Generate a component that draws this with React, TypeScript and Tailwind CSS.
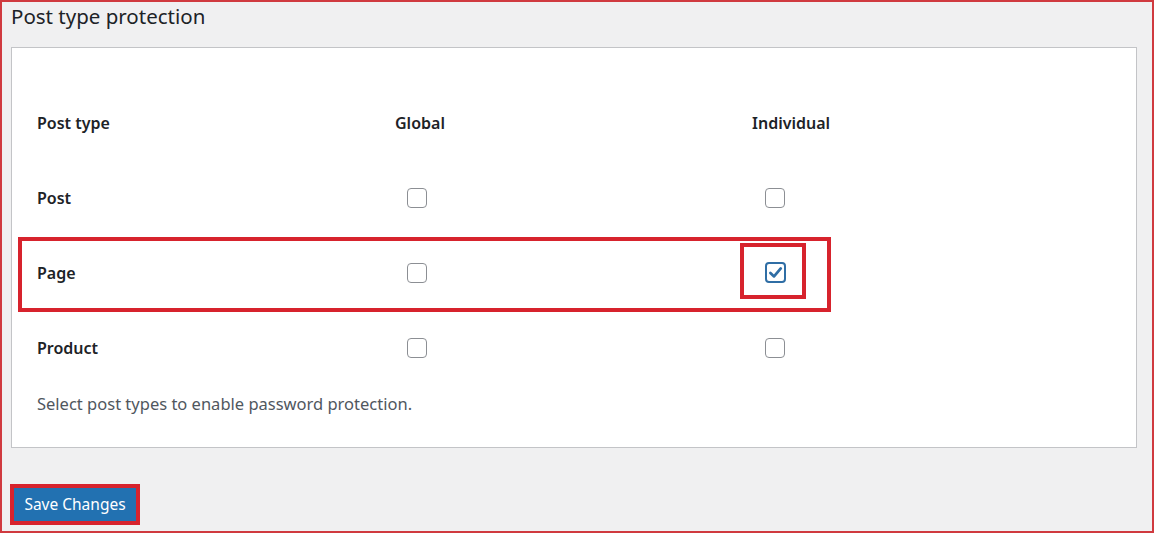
import React from "react";

const font = { fontFamily: '"Noto Sans", "Open Sans", Arial, sans-serif' };

function Box({ checked = false }: { checked?: boolean }) {
  if (checked) {
    return (
      <span className="flex h-[21px] w-[21px] items-center justify-center rounded-[4px] border-2 border-[#2f6ea5] bg-white">
        <svg width="17" height="17" viewBox="0 0 20 20">
          <path d="M4 10.5 L8.3 14.6 L16.2 5.2" fill="none" stroke="#2f6ea5" strokeWidth="3.2" strokeLinecap="round" strokeLinejoin="round" />
        </svg>
      </span>
    );
  }
  return <span className="block h-[20px] w-[20px] rounded-[4px] border border-[#8c8f94] bg-white" />;
}

const rows = [
  { name: "Post", g: false, i: false },
  { name: "Page", g: false, i: true },
  { name: "Product", g: false, i: false },
];

export default function App() {
  return (
    <div
      className="relative h-[533px] w-[1154px] overflow-hidden border-2 border-[#d03a3f] bg-[#f0f0f1] pl-[9px]"
      style={font}
    >
      <h1 className="h-[28px] text-[20.5px] font-normal leading-[28px] text-[#1d2327]">Post type protection</h1>
      <div className="relative mt-[17px] h-[401px] w-[1126px] border border-[#c3c4c7] bg-white pl-[25px] pt-[37px]">
        <div className="grid grid-cols-[358px_357px_1fr] text-[16px] font-semibold text-[#1d2327]">
          <div className="flex h-[75px] items-center">Post type</div>
          <div className="flex h-[75px] items-center">Global</div>
          <div className="flex h-[75px] items-center">Individual</div>
          {rows.map((r) => (
            <React.Fragment key={r.name}>
              <div className="flex h-[75px] items-center">{r.name}</div>
              <div className="flex h-[75px] items-center pl-[12px]">
                <Box checked={r.g} />
              </div>
              <div className="flex h-[75px] items-center pl-[13px]">
                <Box checked={r.i} />
              </div>
            </React.Fragment>
          ))}
        </div>
        <p className="mt-[7px] text-[16.5px] leading-[24px] text-[#50575e]">
          Select post types to enable password protection.
        </p>
        <div className="pointer-events-none absolute left-[6px] top-[189px] h-[75px] w-[813px] border-4 border-[#d7232d]" />
        <div className="pointer-events-none absolute left-[728px] top-[195px] h-[56px] w-[66px] border-4 border-[#d7232d]" />
      </div>
      <div className="ml-[-1px] mt-[36px]">
        <button className="h-[41px] w-[130px] border-4 border-[#d7232d] bg-[#2271b1] text-[15.5px] leading-[33px] text-white">
          Save Changes
        </button>
      </div>
    </div>
  );
}
